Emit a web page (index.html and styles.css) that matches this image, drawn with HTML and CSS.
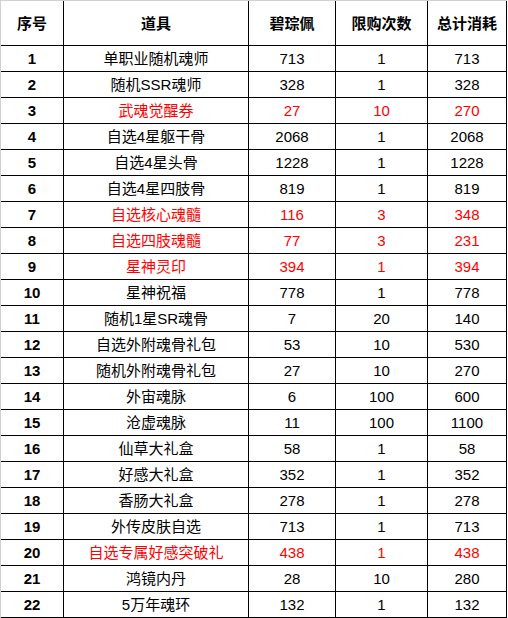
FILE: index.html
```html
<!DOCTYPE html>
<html lang="zh">
<head>
<meta charset="utf-8">
<title>道具表</title>
<link rel="stylesheet" href="styles.css">
</head>
<body>
<div class="sheet">
  <div class="cell head">序号</div><div class="cell head">道具</div><div class="cell head">碧琮佩</div><div class="cell head">限购次数</div><div class="cell head">总计消耗</div>

  <div class="cell idx">1</div><div class="cell">单职业随机魂师</div><div class="cell">713</div><div class="cell">1</div><div class="cell">713</div>
  <div class="cell idx">2</div><div class="cell">随机SSR魂师</div><div class="cell">328</div><div class="cell">1</div><div class="cell">328</div>
  <div class="cell idx">3</div><div class="cell red">武魂觉醒券</div><div class="cell red">27</div><div class="cell red">10</div><div class="cell red">270</div>
  <div class="cell idx">4</div><div class="cell">自选4星躯干骨</div><div class="cell">2068</div><div class="cell">1</div><div class="cell">2068</div>
  <div class="cell idx">5</div><div class="cell">自选4星头骨</div><div class="cell">1228</div><div class="cell">1</div><div class="cell">1228</div>
  <div class="cell idx">6</div><div class="cell">自选4星四肢骨</div><div class="cell">819</div><div class="cell">1</div><div class="cell">819</div>
  <div class="cell idx">7</div><div class="cell red">自选核心魂髓</div><div class="cell red">116</div><div class="cell red">3</div><div class="cell red">348</div>
  <div class="cell idx">8</div><div class="cell red">自选四肢魂髓</div><div class="cell red">77</div><div class="cell red">3</div><div class="cell red">231</div>
  <div class="cell idx">9</div><div class="cell red">星神灵印</div><div class="cell red">394</div><div class="cell red">1</div><div class="cell red">394</div>
  <div class="cell idx">10</div><div class="cell">星神祝福</div><div class="cell">778</div><div class="cell">1</div><div class="cell">778</div>
  <div class="cell idx">11</div><div class="cell">随机1星SR魂骨</div><div class="cell">7</div><div class="cell">20</div><div class="cell">140</div>
  <div class="cell idx">12</div><div class="cell">自选外附魂骨礼包</div><div class="cell">53</div><div class="cell">10</div><div class="cell">530</div>
  <div class="cell idx">13</div><div class="cell">随机外附魂骨礼包</div><div class="cell">27</div><div class="cell">10</div><div class="cell">270</div>
  <div class="cell idx">14</div><div class="cell">外宙魂脉</div><div class="cell">6</div><div class="cell">100</div><div class="cell">600</div>
  <div class="cell idx">15</div><div class="cell">沧虚魂脉</div><div class="cell">11</div><div class="cell">100</div><div class="cell">1100</div>
  <div class="cell idx">16</div><div class="cell">仙草大礼盒</div><div class="cell">58</div><div class="cell">1</div><div class="cell">58</div>
  <div class="cell idx">17</div><div class="cell">好感大礼盒</div><div class="cell">352</div><div class="cell">1</div><div class="cell">352</div>
  <div class="cell idx">18</div><div class="cell">香肠大礼盒</div><div class="cell">278</div><div class="cell">1</div><div class="cell">278</div>
  <div class="cell idx">19</div><div class="cell">外传皮肤自选</div><div class="cell">713</div><div class="cell">1</div><div class="cell">713</div>
  <div class="cell idx">20</div><div class="cell red">自选专属好感突破礼</div><div class="cell red">438</div><div class="cell red">1</div><div class="cell red">438</div>
  <div class="cell idx">21</div><div class="cell">鸿镜内丹</div><div class="cell">28</div><div class="cell">10</div><div class="cell">280</div>
  <div class="cell idx">22</div><div class="cell">5万年魂环</div><div class="cell">132</div><div class="cell">1</div><div class="cell">132</div>
</div>
</body>
</html>
```
FILE: styles.css
```css
html, body {
  margin: 0;
  padding: 0;
  background: #ffffff;
}

.sheet {
  display: grid;
  grid-template-columns: 63px 185px 87px 92px 79px;
  grid-template-rows: 45px repeat(22, 26px);
  width: max-content;
  border-top: 1px solid #d0d0d0;
  border-left: 1px solid #d0d0d0;
  font-family: "Liberation Sans", "Noto Sans CJK SC", sans-serif;
  font-size: 15px;
  color: #000000;
}

.cell {
  box-sizing: border-box;
  border-right: 1px solid #000000;
  border-bottom: 1px solid #000000;
  display: flex;
  align-items: center;
  justify-content: center;
  white-space: nowrap;
  line-height: 1;
}

.head {
  font-weight: bold;
}

.idx {
  font-weight: bold;
}

.red {
  color: #ff0000;
}
```
